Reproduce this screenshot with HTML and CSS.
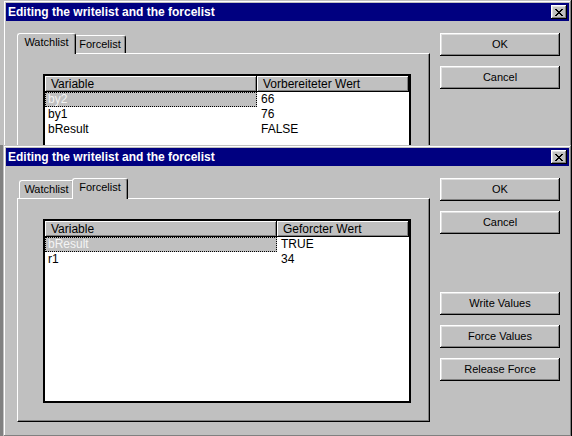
FILE: index.html
```html
<!DOCTYPE html>
<html>
<head>
<meta charset="utf-8">
<title>Editing the writelist and the forcelist</title>
<link rel="stylesheet" href="styles.css">
</head>
<body>
<div class="dialog dialog-back">
  <div class="titlebar">
    <span class="title">Editing the writelist and the forcelist</span>
    <span class="close"><svg width="8" height="7" viewBox="0 0 8 7" shape-rendering="crispEdges"><path d="M0 0h2v1H0zM6 0h2v1H6zM1 1h2v1H1zM5 1h2v1H5zM2 2h4v1H2zM3 3h2v1H3zM2 4h4v1H2zM1 5h2v1H1zM5 5h2v1H5zM0 6h2v1H0zM6 6h2v1H6z" fill="#000"/></svg></span>
  </div>
  <div class="body">
    <div class="left">
      <div class="tabs">
        <div class="tab tab-watch active">Watchlist</div>
        <div class="tab tab-force">Forcelist</div>
      </div>
      <div class="panel">
        <div class="listview lv-watch">
          <div class="lv-row lv-head">
            <div class="hd">Variable</div>
            <div class="hd">Vorbereiteter Wert</div>
          </div>
          <div class="lv-row selected"><div class="cell c1">by2</div><div class="cell c2">66</div></div>
          <div class="lv-row"><div class="cell c1">by1</div><div class="cell c2">76</div></div>
          <div class="lv-row"><div class="cell c1">bResult</div><div class="cell c2">FALSE</div></div>
        </div>
      </div>
    </div>
    <div class="buttons">
      <div class="btn-group">
        <div class="btn">OK</div>
        <div class="btn">Cancel</div>
      </div>
    </div>
  </div>
</div>

<div class="dialog dialog-front">
  <div class="titlebar">
    <span class="title">Editing the writelist and the forcelist</span>
    <span class="close"><svg width="8" height="7" viewBox="0 0 8 7" shape-rendering="crispEdges"><path d="M0 0h2v1H0zM6 0h2v1H6zM1 1h2v1H1zM5 1h2v1H5zM2 2h4v1H2zM3 3h2v1H3zM2 4h4v1H2zM1 5h2v1H1zM5 5h2v1H5zM0 6h2v1H0zM6 6h2v1H6z" fill="#000"/></svg></span>
  </div>
  <div class="body">
    <div class="left">
      <div class="tabs">
        <div class="tab tab-watch">Watchlist</div>
        <div class="tab tab-force active">Forcelist</div>
      </div>
      <div class="panel">
        <div class="listview lv-force">
          <div class="lv-row lv-head">
            <div class="hd">Variable</div>
            <div class="hd">Geforcter Wert</div>
          </div>
          <div class="lv-row selected"><div class="cell c1">bResult</div><div class="cell c2">TRUE</div></div>
          <div class="lv-row"><div class="cell c1">r1</div><div class="cell c2">34</div></div>
        </div>
      </div>
    </div>
    <div class="buttons">
      <div class="btn-group">
        <div class="btn">OK</div>
        <div class="btn">Cancel</div>
      </div>
      <div class="btn-group btn-group-extra">
        <div class="btn">Write Values</div>
        <div class="btn">Force Values</div>
        <div class="btn">Release Force</div>
      </div>
    </div>
  </div>
</div>
</body>
</html>
```

FILE: styles.css
```css
* { box-sizing: border-box; }
html, body { margin: 0; padding: 0; }
body {
  width: 572px;
  height: 436px;
  overflow: hidden;
  position: relative;
  background: linear-gradient(#c0c0c0 0, #c0c0c0 145px, #808080 145px);
  font-family: "Liberation Sans", Arial, sans-serif;
  font-size: 11px;
  color: #000;
}

.dialog {
  position: absolute;
  left: 3px;
  width: 569px;
  height: 292px;
  background: #c0c0c0;
  padding: 3px;
  box-shadow: inset -1px -1px #000, inset 1px 1px #c0c0c0, inset -2px -2px #808080, inset 2px 2px #fff;
  display: flex;
  flex-direction: column;
}
.dialog-back { top: 0; }
.dialog-front { top: 145px; }

.titlebar {
  height: 18px;
  flex: none;
  background: #000080;
  color: #fff;
  display: flex;
  align-items: center;
  justify-content: space-between;
  padding: 0 2px 0 2px;
}
.title {
  font-weight: bold;
  font-size: 12px;
  white-space: nowrap;
}
.close {
  width: 16px;
  height: 14px;
  background: #c0c0c0;
  box-shadow: inset -1px -1px #000, inset 1px 1px #fff, inset -2px -2px #808080, inset 2px 2px #dfdfdf;
  display: flex;
  align-items: center;
  justify-content: center;
  padding-left: 0;
}
.close svg { display: block; }

.body {
  display: flex;
  padding: 12px 0 0 11px;
  gap: 10px;
}

.left { width: 413px; display: flex; flex-direction: column; }

.tabs {
  height: 20px;
  display: flex;
  align-items: flex-end;
  padding-left: 2px;
}
.tab {
  height: 18px;
  line-height: 16px;
  text-align: center;
  background: #c0c0c0;
  border-top: 1px solid #fff;
  border-left: 1px solid #fff;
  border-right: 1px solid #000;
  border-radius: 3px 3px 0 0;
  box-shadow: inset -1px 0 #808080;
  white-space: nowrap;
}
.tab-watch { width: 55px; }
.tab-force { width: 52px; }
.tab.active {
  height: 21px;
  margin: 0 -2px -1px -2px;
  position: relative;
  z-index: 1;
}
.tab-watch.active { width: 59px; }
.tab-force.active { width: 56px; }

.panel {
  height: 224px;
  border-style: solid;
  border-width: 1px;
  border-color: #fff #000 #000 #fff;
  box-shadow: inset -1px -1px #808080;
  padding: 20px 18px 18px 25px;
}

.listview {
  width: 368px;
  height: 184px;
  background: #fff;
  border: 2px solid #000;
  border-color: #000 #000 #000 #000;
  font-size: 12px;
}
.lv-row {
  display: grid;
  height: 15px;
}
.lv-watch .lv-row { grid-template-columns: 212px 1fr; }
.lv-force .lv-row { grid-template-columns: 232px 1fr; }
.lv-row.lv-head { height: 16px; }
.hd {
  background: #c0c0c0;
  line-height: 16px;
  padding-left: 6px;
  box-shadow: inset -1px -1px #000, inset 1px 1px #fff, inset -2px -2px #808080;
  white-space: nowrap;
  overflow: hidden;
}
.cell {
  line-height: 13px;
  border: 1px solid transparent;
  white-space: nowrap;
}
.c1 { padding-left: 2px; }
.c2 { padding-left: 3px; }
.selected .c1 {
  background: #c0c0c0;
  color: #f4f4f4;
  border: 1px dotted #000;
}

.buttons {
  width: 120px;
  display: flex;
  flex-direction: column;
  gap: 10px;
}
.btn-group {
  display: flex;
  flex-direction: column;
  gap: 10px;
}
.btn-group-extra { margin-top: 48px; }
.btn {
  height: 23px;
  line-height: 23px;
  text-align: center;
  background: #c0c0c0;
  box-shadow: inset -1px -1px #000, inset 1px 1px #fff, inset -2px -2px #808080, inset 2px 2px #dfdfdf;
  white-space: nowrap;
}
```
